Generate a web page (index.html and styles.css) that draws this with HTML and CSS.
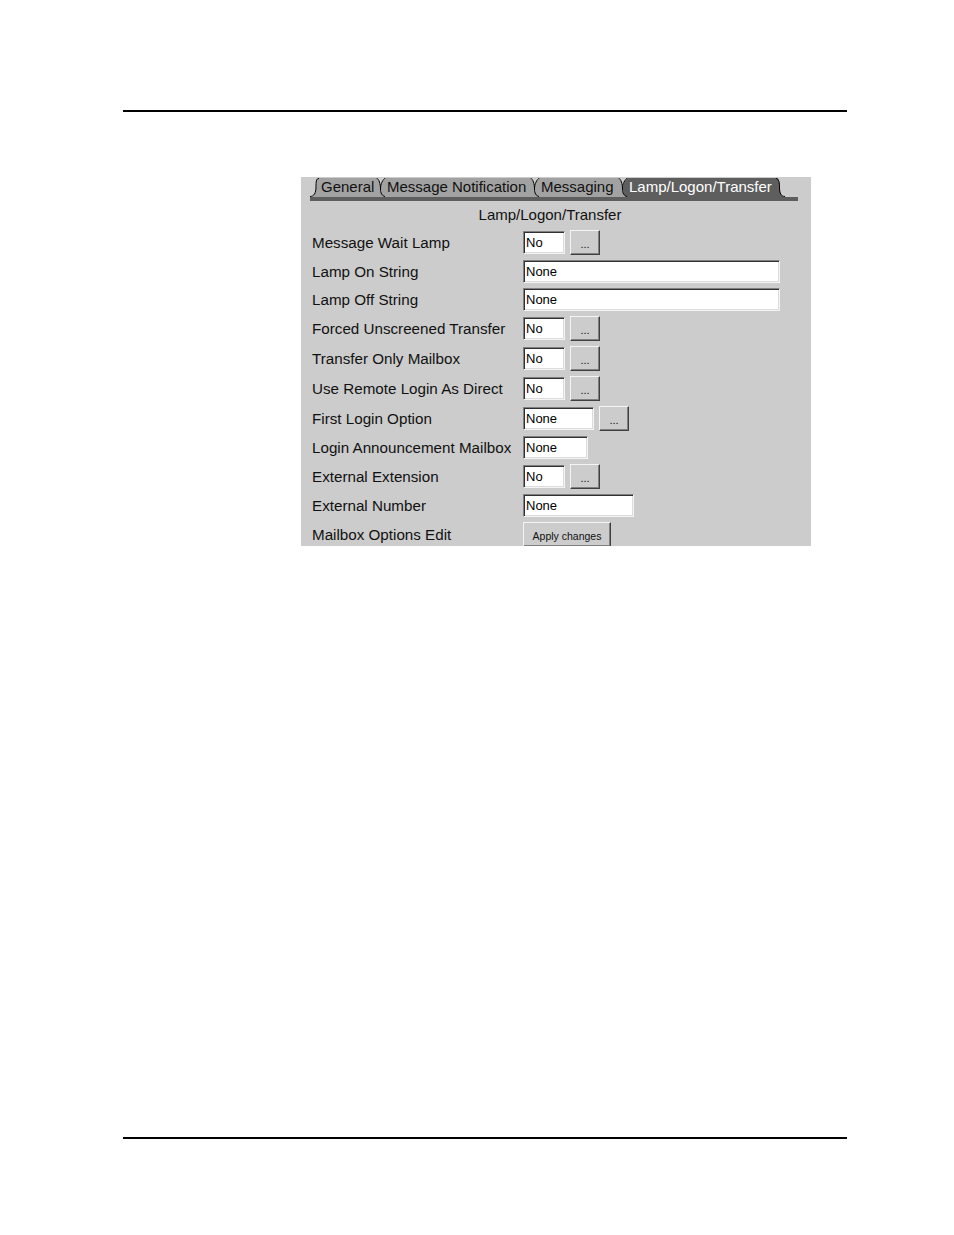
FILE: index.html
```html
<!DOCTYPE html>
<html>
<head>
<meta charset="utf-8">
<title>Lamp/Logon/Transfer</title>
<link rel="stylesheet" href="styles.css">
</head>
<body>
<div class="page">
  <div class="rule"></div>
  <div class="panel">
    <div class="tabstrip">
      <svg class="edge" width="10" height="19" viewBox="0 0 10 19"><path class="f-tab" d="M10,0 L9,0 C6,0 6,4 6,9 C6,15 4,19 0,19 L10,19 Z"/><path class="stroke" d="M9,0.5 C6,0.5 6,4 6,9 C6,15 4,18.5 0,18.5"/></svg>
      <div class="tab t-general">General</div>
      <svg class="sep" width="10" height="19" viewBox="0 0 10 19"><path class="f-tab" d="M0,0 C3,1 4,6 5,11 C5,15 6,18 9,19 L0,19 Z"/><path class="f-tab" d="M10,0 C7,1 5,6 5,11 C5,15 6,18 9,19 L10,19 Z"/><path class="f-panel" d="M0,0 C3,1 4,6 5,11 C5,6 7,1 10,0 Z"/><path class="stroke" d="M0.5,0 C3,1 4.5,6 4.5,11 M9.5,0 C7,1 4.5,6 4.5,11 C4.5,15 6,18 9,18.5"/></svg>
      <div class="tab t-notify">Message Notification</div>
      <svg class="sep" width="10" height="19" viewBox="0 0 10 19"><path class="f-tab" d="M0,0 C3,1 4,6 5,11 C5,15 6,18 9,19 L0,19 Z"/><path class="f-tab" d="M10,0 C7,1 5,6 5,11 C5,15 6,18 9,19 L10,19 Z"/><path class="f-panel" d="M0,0 C3,1 4,6 5,11 C5,6 7,1 10,0 Z"/><path class="stroke" d="M0.5,0 C3,1 4.5,6 4.5,11 M9.5,0 C7,1 4.5,6 4.5,11 C4.5,15 6,18 9,18.5"/></svg>
      <div class="tab t-messaging">Messaging</div>
      <svg class="sep" width="10" height="19" viewBox="0 0 10 19"><path class="f-tab" d="M0,0 C3,1 4,6 5,11 C5,15 6,18 9,19 L0,19 Z"/><path class="f-active" d="M10,0 C7,1 5,6 5,11 C5,15 6,18 9,19 L10,19 Z"/><path class="f-panel" d="M0,0 C3,1 4,6 5,11 C5,6 7,1 10,0 Z"/><path class="stroke" d="M0.5,0 C3,1 4.5,6 4.5,11 M9.5,0 C7,1 4.5,6 4.5,11 C4.5,15 6,18 9,18.5"/></svg>
      <div class="tab active t-lamp">Lamp/Logon/Transfer</div>
      <svg class="edge" width="10" height="19" viewBox="0 0 10 19"><path class="f-active" d="M0,0 L1,0 C4,0 5,5 5,10 C5,15 6,19 10,19 L0,19 Z"/><path class="stroke" d="M1,0.5 C4,0.5 4.5,5 4.5,10 C4.5,15 6,18.5 10,18.5"/></svg>
    </div>
    <div class="tabbar"></div>
    <div class="title">Lamp/Logon/Transfer</div>
    <div class="rows">
      <div class="row"><span class="label">Message Wait Lamp</span><span class="ctrls"><span class="field w-no">No</span><span class="btn dots">...</span></span></div>
      <div class="row"><span class="label">Lamp On String</span><span class="ctrls"><span class="field w-wide">None</span></span></div>
      <div class="row"><span class="label">Lamp Off String</span><span class="ctrls"><span class="field w-wide">None</span></span></div>
      <div class="row"><span class="label">Forced Unscreened Transfer</span><span class="ctrls"><span class="field w-no">No</span><span class="btn dots">...</span></span></div>
      <div class="row"><span class="label">Transfer Only Mailbox</span><span class="ctrls"><span class="field w-no">No</span><span class="btn dots">...</span></span></div>
      <div class="row"><span class="label">Use Remote Login As Direct</span><span class="ctrls"><span class="field w-no">No</span><span class="btn dots">...</span></span></div>
      <div class="row"><span class="label">First Login Option</span><span class="ctrls"><span class="field w-first">None</span><span class="btn dots">...</span></span></div>
      <div class="row"><span class="label">Login Announcement Mailbox</span><span class="ctrls"><span class="field w-ann">None</span></span></div>
      <div class="row"><span class="label">External Extension</span><span class="ctrls"><span class="field w-no">No</span><span class="btn dots">...</span></span></div>
      <div class="row"><span class="label">External Number</span><span class="ctrls"><span class="field w-num">None</span></span></div>
      <div class="row"><span class="label">Mailbox Options Edit</span><span class="ctrls"><span class="btn apply">Apply changes</span></span></div>
    </div>
  </div>
  <div class="rule bottom"></div>
</div>
</body>
</html>
```
FILE: styles.css
```css
* { box-sizing: border-box; }
html, body { margin: 0; padding: 0; background: #fff; }
body { font-family: "Liberation Sans", Arial, sans-serif; color: #111; }

.page { padding-top: 110px; }

.rule {
  margin-left: 123px;
  width: 724px;
  height: 2px;
  background: #000;
}
.rule.bottom { margin-top: 591px; }

.panel {
  margin-top: 65px;
  margin-left: 301px;
  width: 510px;
  height: 369px;
  background: #cccccc;
  overflow: hidden;
}

.tabstrip {
  display: flex;
  align-items: stretch;
  padding-top: 1px;
  padding-left: 310px;
  margin-left: -301px;
  height: 20px;
}
.tabstrip svg { display: block; flex: none; }
.f-tab { fill: #a2a2a2; }
.f-active { fill: #5e5e5e; }
.f-panel { fill: #cccccc; }
.stroke { fill: none; stroke: #000; stroke-width: 1; }

.tab {
  flex: none;
  height: 19px;
  line-height: 18px;
  font-size: 15px;
  background: #a2a2a2;
  color: #111;
  padding-left: 1px;
  white-space: nowrap;
}
.tab.active { background: #5e5e5e; color: #fff; }
.t-general { width: 56px; }
.t-notify { width: 144px; }
.t-messaging { width: 78px; }
.t-lamp { width: 147px; }

.tabbar {
  margin-left: 9px;
  width: 488px;
  height: 4px;
  background: #5e5e5e;
}

.title {
  margin-top: 5px;
  height: 18px;
  line-height: 18px;
  font-size: 15px;
  text-align: center;
  padding-right: 12px;
  color: #111;
}

.rows {
  margin-top: 6px;
  padding-left: 11px;
  display: flex;
  flex-direction: column;
  gap: 5px;
}

.row {
  display: flex;
  align-items: center;
}

.label {
  flex: none;
  width: 211px;
  font-size: 15.2px;
  line-height: 18px;
  white-space: nowrap;
  color: #111;
}

.ctrls {
  display: flex;
  align-items: center;
  gap: 5px;
}

.field {
  display: block;
  height: 23px;
  line-height: 19px;
  font-size: 13px;
  color: #000;
  background: #fff;
  border-top: 1px solid #808080;
  border-left: 1px solid #808080;
  border-right: 1px solid #f4f4f4;
  border-bottom: 1px solid #f4f4f4;
  box-shadow: inset 1px 1px 0 #303030, inset -1px -1px 0 #dcdcdc;
  padding-top: 1px;
  padding-left: 2px;
  white-space: nowrap;
}
.w-no { width: 42px; }
.w-wide { width: 257px; }
.w-first { width: 71px; }
.w-ann { width: 65px; }
.w-num { width: 111px; }

.btn {
  display: block;
  height: 25px;
  background: #cccccc;
  border-top: 1px solid #f4f4f4;
  border-left: 1px solid #f4f4f4;
  border-right: 1px solid #404040;
  border-bottom: 1px solid #404040;
  box-shadow: inset -1px -1px 0 #808080;
  text-align: center;
  color: #111;
  white-space: nowrap;
}
.btn.dots {
  width: 30px;
  font-size: 11px;
  line-height: 26px;
}
.btn.apply {
  width: 88px;
  font-size: 10.5px;
  line-height: 25px;
  padding-top: 1px;
}
```
